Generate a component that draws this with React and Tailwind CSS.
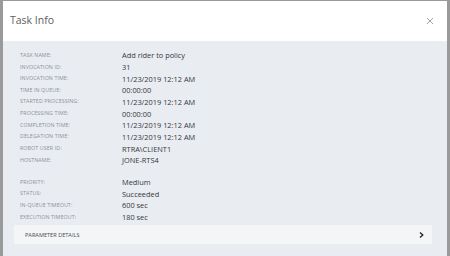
import React from "react";

const rows1 = [
  ["Task Name:", "Add rider to policy"],
  ["Invocation ID:", "31"],
  ["Invocation Time:", "11/23/2019 12:12 AM"],
  ["Time in Queue:", "00:00:00"],
  ["Started Processing:", "11/23/2019 12:12 AM"],
  ["Processing Time:", "00:00:00"],
  ["Completion Time:", "11/23/2019 12:12 AM"],
  ["Delegation Time:", "11/23/2019 12:12 AM"],
  ["Robot User ID:", "RTRA\\CLIENT1"],
  ["Hostname:", "JONE-RTS4"],
];
const rows2 = [
  ["Priority:", "Medium"],
  ["Status:", "Succeeded"],
  ["In-Queue Timeout:", "600 sec"],
  ["Execution Timeout:", "180 sec"],
];

function Row({ label, value }) {
  return (
    <div className="flex h-[11.67px] items-center">
      <div className="w-[102px] text-[5.3px] uppercase tracking-[0.1px] text-[#8c919a]">{label}</div>
      <div className="text-[7.4px] text-[#34373c]">{value}</div>
    </div>
  );
}

export default function App() {
  return (
    <div
      className="w-[450px] h-[256px] overflow-hidden bg-[#9a9a9a] pl-[3px] pr-[3px] pt-[1px] flex"
      style={{ fontFamily: '"Open Sans", "Noto Sans", sans-serif' }}
    >
      <div className="flex-1 flex flex-col bg-[#e9ecf1]">
        <div className="h-[40px] bg-white flex items-center justify-between pl-[7px] pr-[13px] shrink-0">
          <span className="text-[10.5px] text-[#5a5d62]">Task Info</span>
          <svg width="8" height="8" viewBox="0 0 8 8" className="text-[#a0a4aa]">
            <path d="M1 1L7 7M7 1L1 7" stroke="currentColor" strokeWidth="1" />
          </svg>
        </div>
        <div className="pl-[17px] pt-[9px] flex flex-col">
          {rows1.map(([l, v]) => (
            <Row key={l} label={l} value={v} />
          ))}
          <div className="h-[10.3px]" />
          {rows2.map(([l, v]) => (
            <Row key={l} label={l} value={v} />
          ))}
        </div>
        <div className="ml-[11px] mr-[15px] mt-[2px] h-[19px] bg-[#f4f5f6] flex items-center justify-between pl-[11px] pr-[8px]">
          <span className="text-[5.6px] uppercase text-[#4a4d52]">Parameter Details</span>
          <svg width="5" height="6" viewBox="0 0 5 6">
            <path d="M1 0.5L3.8 3L1 5.5" stroke="#222" strokeWidth="1.3" fill="none" />
          </svg>
        </div>
      </div>
    </div>
  );
}
